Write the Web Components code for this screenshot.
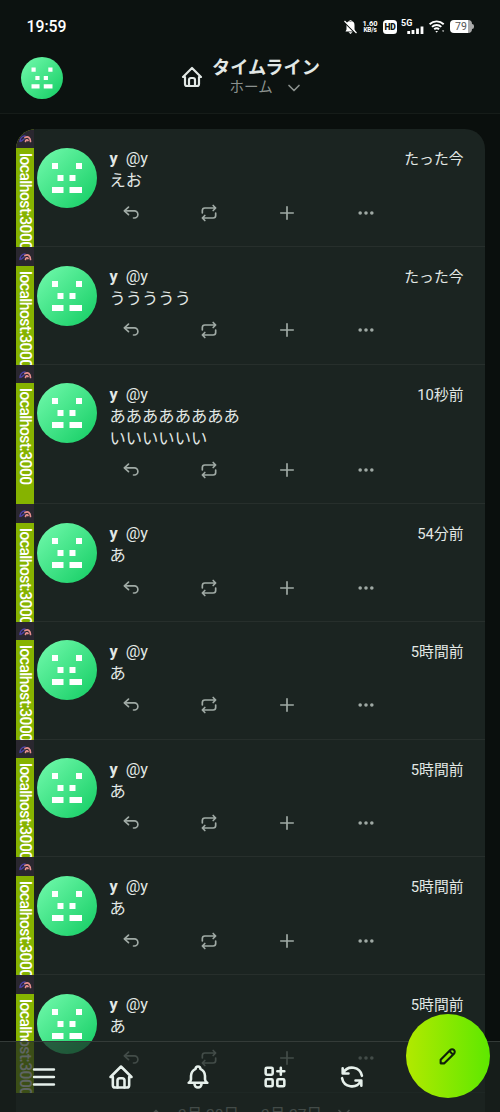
<!DOCTYPE html>
<html lang="ja">
<head>
<meta charset="utf-8">
<title>タイムライン</title>
<style>
html,body{margin:0;height:100%;background:#0a0f0d}
body{font-family:Roboto,"Noto Sans CJK JP",sans-serif;color:#e2e8e5;overflow:hidden}
</style>
</head>
<body>
<timeline-app></timeline-app>
<script>
const ICONS = {
  home: '<path d="M5 12H3l9-9 9 9h-2M5 12v7a2 2 0 0 0 2 2h10a2 2 0 0 0 2-2v-7"/><path d="M9 21v-6a2 2 0 0 1 2-2h2a2 2 0 0 1 2 2v6"/>',
  chevron: '<path d="m6 9 6 6 6-6"/>',
  up: '<path d="m6 15 6-6 6 6"/>',
  reply: '<path d="M9 14l-5-4.500L9 5"/><path d="M4.500 9.500H16a4.250 4.250 0 1 1 0 8.500h-1"/>',
  repeat: '<path d="M4 12V9a3 3 0 0 1 3-3h13m-3-3 3 3-3 3"/><path d="M20 12v3a3 3 0 0 1-3 3H4m3 3-3-3 3-3"/>',
  plus: '<path d="M12 4.500v15M4.500 12h15"/>',
  dots: '<g fill="currentColor"><circle cx="5" cy="12" r="1"/><circle cx="12" cy="12" r="1"/><circle cx="19" cy="12" r="1"/></g>',
  menu: '<path d="M3.500 5.500h17M3.500 12h17M3.500 18.500h17"/>',
  bell: '<path d="M10 5a2 2 0 1 1 4 0 7 7 0 0 1 4 6v3a4 4 0 0 0 2 3H4a4 4 0 0 0 2-3v-3a7 7 0 0 1 4-6M9 17v1a3 3 0 0 0 6 0v-1"/>',
  apps: '<rect x="4" y="4" width="6" height="6" rx="1"/><rect x="4" y="14" width="6" height="6" rx="1"/><rect x="14" y="14" width="6" height="6" rx="1"/><path d="M14 7h6M17 4v6"/>',
  refresh: '<path d="M20.500 11A8.600 8.600 0 0 0 4.500 8.500M4 4.500V9h5"/><path d="M3.500 13a8.600 8.600 0 0 0 16 2.500M20 19.500V15h-5"/>',
  pencil: '<path d="M4 20h4L18.500 9.500a2.828 2.828 0 1 0-4-4L4 16v4M13.500 6.500l4 4"/>'
};
function define(name, render) {
  customElements.define(name, class extends HTMLElement {
    connectedCallback() {
      if (this.shadowRoot) return;
      this.attachShadow({mode: 'open'}).innerHTML = render(this);
    }
  });
}
define('ui-icon', el => {
  const s = el.getAttribute('size') || 20;
  return `<style>:host{display:block;width:${s}px;height:${s}px;flex:none}svg{display:block}</style>
  <svg width="${s}" height="${s}" viewBox="0 0 24 24" fill="none" stroke="currentColor" stroke-width="${el.getAttribute('weight') || 2}" stroke-linecap="round" stroke-linejoin="round">${ICONS[el.getAttribute('name')]}</svg>`;
});
define('user-avatar', () => `<style>:host{display:block;border-radius:50%;overflow:hidden;flex:none;background:linear-gradient(135deg,#74fbae,#12cc62)}svg{display:block;width:100%;height:100%}</style>
  <svg viewBox="0 0 60 60" fill="#fff"><path d="M15 15h6v6h-6zM39 15h6v6h-6zM20.500 27h6v6h-6zM32.500 27h6v6h-6zM15 39h11.500v6H15zM32.500 39H45v6H32.500z"/></svg>`);
define('status-bar', () => `<style>
  :host{display:flex;height:53px;box-sizing:border-box;padding:0 26px 0 26.500px;align-items:center;color:#fff}
  .time{font-size:15.800px;font-weight:500;flex:1}
  .icons{display:flex;align-items:center}
  svg{display:block;flex:none}
  .rate{font-size:7.500px;line-height:7px;font-weight:700;text-align:center;width:16px;margin:0 5px 0 5px;white-space:nowrap}
  .rate div+div{font-size:6.500px;letter-spacing:-.2px}
  .hd{width:14px;height:14px;border-radius:3.500px;background:#fff;color:#0c1210;font-size:8.500px;line-height:14px;font-weight:900;text-align:center;margin-right:4px;letter-spacing:-.3px}
  .cell{display:grid;grid-template-columns:12px 11px;width:23px;height:15px;margin-right:5px}
  .cell b{font-size:9px;line-height:8px;font-weight:700}
  .cell svg{align-self:end;margin-left:-6px}
  .bat{display:flex;align-items:center;margin-left:5px}
  .bat span{width:22px;height:12.500px;border-radius:4px;background:linear-gradient(90deg,#fff 80%,#aaa 80%);color:#555;font-size:10.500px;line-height:13px;text-align:center}
  .bat i{width:2px;height:5px;background:#aaa;border-radius:0 2px 2px 0}
  </style><div class="time">19:59</div><div class="icons">
  <svg width="13" height="14" viewBox="0 0 13 14"><path d="M1.500 11.500h10L10.500 9.500V5a4 4 0 0 0-8 0v4.500zM4.500 12.300h4L6.500 14zM5.500 1.500V.2h2v1.300z" fill="#fff"/><path d="M.5 2.300l11.500 11.500" stroke="#0c1210" stroke-width="1.500"/><path d="M.5 1l12 12" stroke="#fff" stroke-width="1.200"/></svg>
  <div class="rate"><div>1.60</div><div>KB/s</div></div><div class="hd">HD</div>
  <div class="cell"><b>5G</b><svg width="17" height="9" viewBox="0 0 17 9" style="grid-column:2"><path d="M1.700 9V6M6 9V5M10.500 9V3.500M15 9V1.500" stroke="#fff" stroke-width="2.800"/></svg></div>
  <svg width="16" height="13" viewBox="0 0 16 13" fill="none" stroke="#fff" stroke-width="1.900"><path d="M.6 4.200a10.200 10.200 0 0 1 14.100 0M3 6.900a6.700 6.700 0 0 1 9.300 0M5.200 9.300a3.600 3.600 0 0 1 4.900 0"/><path d="M6.300 11h2.700l-1.350 1.800zM13 10.500h2.200L14.100 12z" fill="#fff" stroke="none"/></svg>
  <div class="bat"><span>79</span><i></i></div></div>`);
define('app-header', () => `<style>
  :host{display:grid;grid-template-columns:1fr auto 1fr;align-items:center;height:61px;padding:0 21px;box-sizing:border-box;border-bottom:1px solid #161c19}
  user-avatar{width:42px;height:42px;margin-top:-11px}
  .mid{display:flex;align-items:center;gap:8px;margin-top:-12px}
  .title{font-size:18.200px;line-height:21px;font-weight:700}
  .sub{display:flex;align-items:center;font-size:14.500px;line-height:18px;color:#8b918e;padding-left:17.500px;gap:11px}
  </style><user-avatar></user-avatar><div class="mid"><ui-icon name="home" size="24" weight="2.200"></ui-icon><div><div class="title">タイムライン</div><div class="sub">ホーム<ui-icon name="chevron" size="20"></ui-icon></div></div></div>`);
define('server-strip', () => `<style>
  :host{display:flex;flex-direction:column;width:18.500px;overflow:hidden;background:#86b300}
  .logo{height:18.500px;flex:none;background:#2a272f}
  svg{display:block}
  .host{writing-mode:vertical-rl;font-size:15.600px;line-height:18.500px;letter-spacing:-.5px;font-weight:500;color:#fff;white-space:nowrap;margin:5px 0 0 .5px;overflow:visible;height:0}
  </style><div class="logo"><svg width="18.500" height="18.500" viewBox="0 0 18.500 18.500" fill="none" stroke-linecap="round"><path d="M4 12.500c0-3 2-5.500 5-5.500M5.500 12l2.500-2" stroke="#4d42a8" stroke-width="1.500"/><path d="M9 8.500c3-1.500 5.500 0 5.500 4M9.500 12.500c.3-2 2-2 2.500-1" stroke="#e8908f" stroke-width="1.700"/></svg></div><div class="host">localhost:3000</div>`);
define('note-card', el => `<style>
  :host{display:flex;box-sizing:border-box;height:117.700px;border-bottom:1px solid #272f2c;position:relative}
  :host([tall]){height:139.500px}
  server-strip{margin-bottom:-1px}
  user-avatar{width:60px;height:60px;margin:18.500px 13px 0 2.500px}
  .main{flex:1;padding:19px 21px 0 0}
  header{display:flex;font-size:16.300px;line-height:22px;gap:8px}
  header b{font-weight:700}
  time{margin-left:auto;font-size:14.800px}
  .text{font-size:16.300px;line-height:21.800px;white-space:pre-line}
  .acts{display:flex;gap:58.400px;padding:10.500px 0 0 11px;color:#a0aaa5}
  </style><server-strip></server-strip><user-avatar></user-avatar><div class="main"><header><b>y</b><span>@y</span><time>${el.getAttribute('time')}</time></header><div class="text"><slot></slot></div>
  <div class="acts"><ui-icon name="reply"></ui-icon><ui-icon name="repeat"></ui-icon><ui-icon name="plus"></ui-icon><ui-icon name="dots" weight="2.300"></ui-icon></div></div>`);
define('date-divider', () => `<style>:host{display:flex;justify-content:center;align-items:center;height:40px;color:#a0a7a3;font-size:15.500px}span{margin:0 11px}ui-icon{margin:0 1px}</style>
  <ui-icon name="up" size="20"></ui-icon><span>3月 28日</span><span>3月 27日</span><ui-icon name="chevron" size="20"></ui-icon>`);
define('bottom-nav', () => `<style>
  :host{display:flex;box-sizing:border-box;height:71px;border-top:1px solid #343b38;background:rgba(27,36,33,.7);color:#e6f0eb;padding:21px 0 0 30px;gap:49.100px}
  </style>${['menu','home','bell','apps','refresh'].map(n => `<ui-icon name="${n}" size="28" weight="2.200"></ui-icon>`).join('')}`);
define('compose-button', () => `<style>:host{display:flex;align-items:center;justify-content:center;width:84px;height:84px;border-radius:50%;background:linear-gradient(90deg,#b2e900,#5ee800);color:#10200a}</style><ui-icon name="pencil" size="22" weight="2.300"></ui-icon>`);
define('timeline-app', () => `<style>
  :host{display:block;position:relative;width:500px;height:1112px;overflow:hidden;background:#0a0f0d}
  .top{background:#0c1210}
  .list{margin:15.400px 15.500px 0;background:#1b2421;border-radius:20px;overflow:hidden}
  bottom-nav{position:absolute;left:0;right:0;bottom:0}
  compose-button{position:absolute;left:406px;top:1014px}
  </style><div class="top"><status-bar></status-bar><app-header></app-header></div>
  <div class="list"><note-card time="たった今">えお</note-card><note-card time="たった今">ううううう</note-card><note-card tall time="10秒前">ああああああああ
いいいいいい</note-card><note-card time="54分前">あ</note-card>${'<note-card time="5時間前">あ</note-card>'.repeat(4)}<date-divider></date-divider></div>
  <bottom-nav></bottom-nav><compose-button></compose-button>`);
</script>
</body>
</html>
